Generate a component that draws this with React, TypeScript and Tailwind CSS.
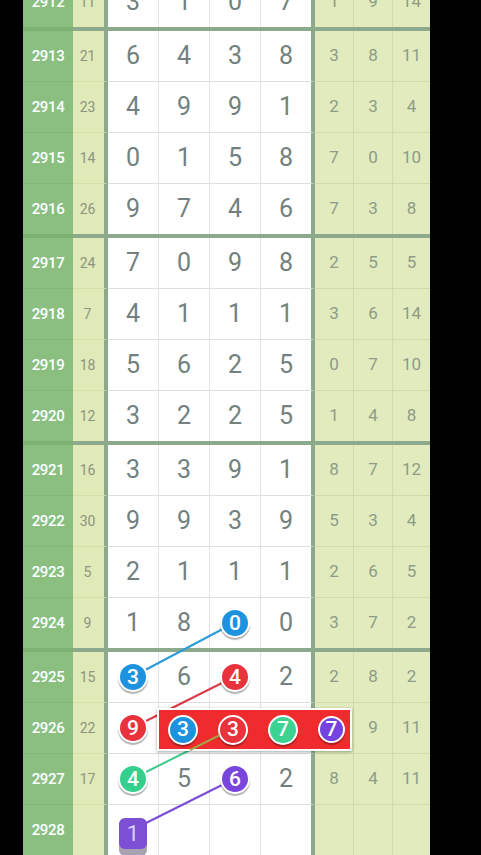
import React from "react";

type Row = {
    period: number;
    sum: string;
    digits: (number | null)[];
    tail: string[];
};

const rows: Row[] = [
    { period: 2912, sum: "11", digits: [3, 1, 0, 7], tail: ["1", "9", "14"] },
    { period: 2913, sum: "21", digits: [6, 4, 3, 8], tail: ["3", "8", "11"] },
    { period: 2914, sum: "23", digits: [4, 9, 9, 1], tail: ["2", "3", "4"] },
    { period: 2915, sum: "14", digits: [0, 1, 5, 8], tail: ["7", "0", "10"] },
    { period: 2916, sum: "26", digits: [9, 7, 4, 6], tail: ["7", "3", "8"] },
    { period: 2917, sum: "24", digits: [7, 0, 9, 8], tail: ["2", "5", "5"] },
    { period: 2918, sum: "7", digits: [4, 1, 1, 1], tail: ["3", "6", "14"] },
    { period: 2919, sum: "18", digits: [5, 6, 2, 5], tail: ["0", "7", "10"] },
    { period: 2920, sum: "12", digits: [3, 2, 2, 5], tail: ["1", "4", "8"] },
    { period: 2921, sum: "16", digits: [3, 3, 9, 1], tail: ["8", "7", "12"] },
    { period: 2922, sum: "30", digits: [9, 9, 3, 9], tail: ["5", "3", "4"] },
    { period: 2923, sum: "5", digits: [2, 1, 1, 1], tail: ["2", "6", "5"] },
    { period: 2924, sum: "9", digits: [1, 8, 0, 0], tail: ["3", "7", "2"] },
    { period: 2925, sum: "15", digits: [3, 6, 4, 2], tail: ["2", "8", "2"] },
    // cols 2-4 sit under the popup
    { period: 2926, sum: "22", digits: [9, null, null, null], tail: ["", "9", "11"] },
    { period: 2927, sum: "17", digits: [4, 5, 6, 2], tail: ["8", "4", "11"] },
    { period: 2928, sum: "", digits: [null, null, null, null], tail: ["", "", ""] },
];

// balls drawn in place of the digit: "period-col" -> colour
const balls: Record<string, string> = {
    "2924-2": "bg-[#1d93e0]",
    "2925-0": "bg-[#1d93e0]",
    "2925-2": "bg-[#e8323c]",
    "2926-0": "bg-[#e8323c]",
    "2927-0": "bg-[#34cf8c]",
    "2927-2": "bg-[#7a45dc]",
};

const Ball = ({ n, color, size = "w-[30px] h-[30px]" }: { n: number; color: string; size?: string }) => (
    <div
        className={`relative z-10 ${size} ${color} rounded-full border-2 border-white flex items-center justify-center text-white text-[21px] font-medium leading-none shadow-[0_2px_1px_rgba(0,0,0,0.3)]`}
    >
        {n}
    </div>
);

const ThickBar = () => (
    <div className="flex h-[4px]">
        <div className="w-[50px] bg-[#7fb172]" />
        <div className="w-[357px] bg-[#8ca98c]" />
    </div>
);

const TableRow = ({ row, last }: { row: Row; last: boolean }) => {
    const h = last ? "h-[50px]" : "h-[51px] border-b";
    return (
        <div className="flex">
            <div className={`w-[50px] ${h} border-[#84b777] bg-[#8bbf7f] flex items-center justify-center text-white text-[15px] font-medium tracking-tight`}>
                {row.period}
            </div>
            <div className={`w-[35px] ${h} border-r-4 border-r-[#8ca98c] border-b-[#d3e0a8] bg-[#dfeab8] flex items-center justify-center pr-[2px] text-[#8c9480] text-[14px]`}>
                {row.sum}
            </div>
            {row.digits.map((d, i) => {
                const key = `${row.period}-${i}`;
                const wide = i === 3 ? "w-[54px] border-r-4 border-r-[#8ca98c]" : "w-[51px] border-r border-r-[#e2e2e2]";
                return (
                    <div key={i} className={`${wide} ${h} border-b-[#dedede] bg-white flex items-center justify-center text-[#72817e] text-[25px]`}>
                        {row.period === 2928 && i === 0 ? (
                            <div className="relative z-10 mt-[6px] w-[28px] h-[31px] rounded-[6px] bg-[#7c4fd4] flex items-center justify-center text-[#ddd0f5] text-[22px] shadow-[0_7px_0_#a9a3b1]">
                                1
                            </div>
                        ) : balls[key] ? (
                            <Ball n={d as number} color={balls[key]} />
                        ) : (
                            d
                        )}
                    </div>
                );
            })}
            {row.tail.map((t, i) => (
                <div
                    key={i}
                    className={`${i === 2 ? "w-[37px]" : "w-[39px] border-r border-r-[#cfdca8]"} ${h} border-b-[#cfdca8] bg-[#e1ebbe] flex items-center justify-center text-[#8e9b87] text-[17px]`}
                >
                    {t}
                </div>
            ))}
        </div>
    );
};

const App = () => {
    const groups: Row[][] = [rows.slice(1, 5), rows.slice(5, 9), rows.slice(9, 13), rows.slice(13, 17)];
    return (
        <div className="relative w-[481px] h-[855px] overflow-hidden bg-black font-[Roboto,'Noto_Sans',sans-serif]">
            <div className="ml-[23px] -mt-[23px] w-[407px]">
                <TableRow row={rows[0]} last />
                {groups.map((g, gi) => (
                    <div key={gi}>
                        <ThickBar />
                        {g.map((r, ri) => (
                            <TableRow key={r.period} row={r} last={ri === g.length - 1} />
                        ))}
                    </div>
                ))}
            </div>

            <svg className="absolute inset-0 pointer-events-none" width="481" height="855">
                <line x1="234" y1="623" x2="132" y2="677" stroke="#2b9bd9" strokeWidth="2" />
                <line x1="234" y1="677" x2="132" y2="728" stroke="#d83a44" strokeWidth="2" />
                <line x1="234" y1="728" x2="132" y2="779" stroke="#3cc98b" strokeWidth="2" />
                <line x1="234" y1="779" x2="132" y2="830" stroke="#7b4ad8" strokeWidth="2" />
            </svg>

            <div className="absolute z-20 left-[157px] top-[708px] w-[195px] h-[43px] bg-[#f02b2d] border-2 border-white shadow-[0_1px_3px_rgba(0,0,0,0.35)] flex items-center pl-[9px] gap-[20px]">
                <Ball n={3} color="bg-[#1d93e0]" />
                <Ball n={3} color="bg-[#e8323c]" />
                <Ball n={7} color="bg-[#3bd292]" />
                <Ball n={7} color="bg-[#7443e0]" size="w-[27px] h-[27px]" />
            </div>

            <svg className="absolute inset-0 z-30 pointer-events-none" width="481" height="855">
                <line x1="219.7" y1="735.2" x2="190" y2="750" stroke="#a3a545" strokeWidth="2" />
            </svg>
        </div>
    );
};

export default App;
